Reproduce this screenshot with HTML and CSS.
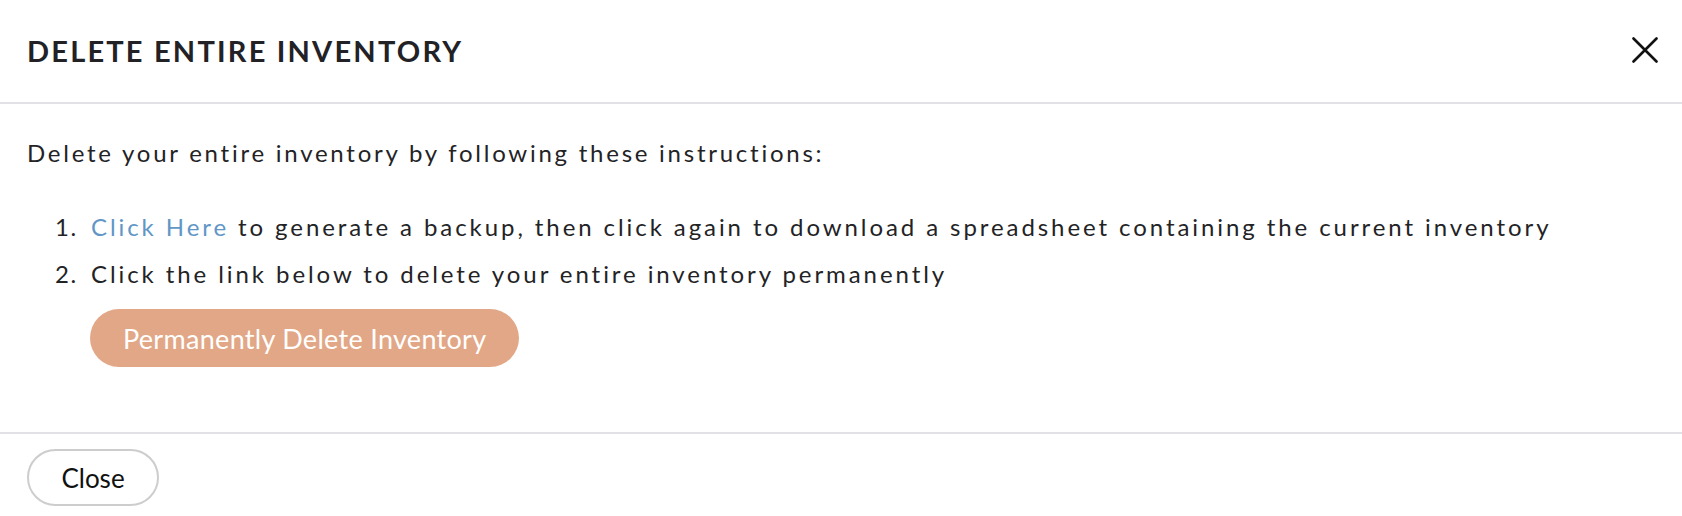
FILE: index.html
```html
<!DOCTYPE html>
<html>
<head>
<meta charset="utf-8">
<link rel="stylesheet" href="styles.css">
</head>
<body>
<div class="modal">
  <div class="modal-header">
    <h2 class="modal-title">DELETE ENTIRE INVENTORY</h2>
    <button class="icon-close" aria-label="Close">
      <svg width="26" height="26" viewBox="0 0 26 26"><path d="M1.5 1.5 L24.5 24.5 M24.5 1.5 L1.5 24.5" stroke="#111" stroke-width="2.6" stroke-linecap="round" fill="none"/></svg>
    </button>
  </div>
  <div class="modal-body">
    <p class="intro">Delete your entire inventory by following these instructions:</p>
    <ol class="steps">
      <li><span class="num">1.</span><span><a class="link" href="#">Click Here</a> to generate a backup, then click again to download a spreadsheet containing the current inventory</span></li>
      <li><span class="num">2.</span><span>Click the link below to delete your entire inventory permanently</span></li>
    </ol>
    <button class="btn-danger">Permanently Delete Inventory</button>
  </div>
  <div class="modal-footer">
    <button class="btn-close">Close</button>
  </div>
</div>
</body>
</html>
```
FILE: styles.css
```css
* { box-sizing: border-box; }
html, body { margin: 0; padding: 0; background: #fff; }
body { font-family: Lato, "Noto Sans", sans-serif; color: #232326; }
.modal { width: 1682px; height: 516px; display: flex; flex-direction: column; }
.modal-header {
  height: 104px;
  display: flex; align-items: center; justify-content: space-between;
  padding: 0 24px 2px 27px;
  border-bottom: 2px solid #e2e2e6;
}
.modal-title {
  margin: 0; font-size: 29px; font-weight: 700; letter-spacing: 2.2px; color: #222226;
}
.icon-close { border: 0; background: none; padding: 0; width: 26px; height: 26px; display: flex; }
.modal-body { padding: 0 27px; height: 328px; }
.intro { margin: 31px 0 0; font-size: 24px; line-height: 36px; letter-spacing: 2.75px; }
.steps { list-style: none; margin: 32px 0 0; padding: 0 0 0 28px; font-size: 24px; line-height: 47px; letter-spacing: 2.92px; }
.steps li { display: flex; }
.num { width: 36px; flex: none; letter-spacing: 1.5px; }
.link { color: #6196c6; text-decoration: none; }
.btn-danger {
  margin: 12px 0 0 63px; height: 58px; padding: 0 33px; border: 0; border-radius: 29px;
  background: #e2a786; color: #fff; font-family: Lato, sans-serif; font-size: 27px; letter-spacing: 0.3px;
}
.modal-footer { border-top: 2px solid #e2e2e6; padding: 15px 27px 0; }
.btn-close {
  width: 132px; height: 57px; border: 2px solid #cdcdcd; border-radius: 29px; background: #fff;
  font-family: Lato, sans-serif; font-size: 26px; color: #111;
}
```
